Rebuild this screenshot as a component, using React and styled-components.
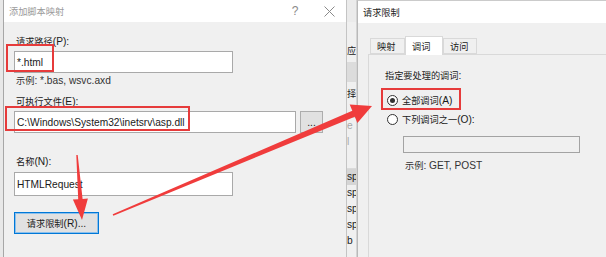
import React from "react";
import styled, { createGlobalStyle } from "styled-components";

const GlobalStyle = createGlobalStyle`
  html, body {
    margin: 0;
    padding: 0;
    background: #f0f0f0;
  }
  body {
    font-family: "Liberation Sans", "Noto Sans CJK SC", sans-serif;
    font-size: 10.2px;
    color: #1a1a1a;
  }
`;

const Screen = styled.div`
  position: relative;
  display: flex;
  width: 606px;
  height: 257px;
  overflow: hidden;
  background: #f0f0f0;
`;

const Gutter = styled.div`
  flex: none;
  width: 3px;
  background: #e8e8e8;
`;

const Dialog = styled.section`
  flex: ${(p) => (p.$width ? "none" : "1")};
  width: ${(p) => (p.$width ? `${p.$width}px` : "auto")};
  display: flex;
  flex-direction: column;
  background: #f0f0f0;
  border-left: 1px solid ${(p) => (p.$active ? "#b9b9b9" : "#a7a7a7")};
  border-right: ${(p) => (p.$active ? "none" : "1px solid #c4c4c4")};
  border-top: ${(p) => (p.$active ? "1px solid #cbcbcb" : "none")};
  box-sizing: border-box;
  min-width: 0;
`;

const TitleBar = styled.header`
  flex: none;
  height: 22px;
  display: flex;
  align-items: center;
  padding-left: 5px;
  background: #fff;
  color: ${(p) => (p.$active ? "#1a1a1a" : "#9a9a9a")};
`;

const TitleText = styled.span`
  flex: 1;
  line-height: 16px;
`;

const CaptionButton = styled.span`
  width: 34px;
  height: 22px;
  display: flex;
  align-items: center;
  justify-content: center;
  color: #8a8a8a;
  font-size: 12px;
`;

const LeftBody = styled.div`
  display: flex;
  flex-direction: column;
  align-items: flex-start;
  padding-left: 10px;
`;

const Label = styled.div`
  margin: ${(p) => p.$top}px 0 ${(p) => p.$bottom || 1}px 2px;
  line-height: 16px;
  white-space: nowrap;
`;

const Hint = styled.div`
  margin: ${(p) => p.$top || 0}px 0 0 ${(p) => p.$left || 2}px;
  line-height: 14px;
  color: #333;
  white-space: nowrap;
`;

const Row = styled.div`
  display: flex;
  gap: 4px;
`;

const TextBox = styled.div`
  box-sizing: border-box;
  width: ${(p) => p.$w}px;
  height: ${(p) => p.$h}px;
  padding-left: 2px;
  display: flex;
  align-items: center;
  background: ${(p) => (p.$disabled ? "#f0f0f0" : "#fff")};
  border: 1px solid ${(p) => (p.$disabled ? "#a3a3a3" : "#a9a9a9")};
  white-space: nowrap;
  overflow: hidden;
  margin: ${(p) => p.$mt || 0}px 0 0 ${(p) => p.$ml || 0}px;
`;

const Button = styled.div`
  box-sizing: border-box;
  height: 22px;
  width: ${(p) => p.$w}px;
  display: flex;
  align-items: center;
  justify-content: center;
  background: #e1e1e1;
  border: 1px solid ${(p) => (p.$default ? "#0078d7" : "#adadad")};
  box-shadow: ${(p) => (p.$default ? "inset 0 0 0 1px #8cc0ec" : "none")};
  margin-top: ${(p) => p.$mt || 0}px;
  white-space: nowrap;
  color: #1a1a1a;
`;

const Strip = styled.div`
  flex: none;
  width: 10px;
  display: flex;
  flex-direction: column;
  overflow: hidden;
  background: #f0f0f0;
  border-right: 1px solid #d4d4d4;
  box-sizing: border-box;
`;

const StripCell = styled.div`
  flex: none;
  height: ${(p) => p.$h}px;
  display: flex;
  align-items: center;
  background: ${(p) => p.$bg || "transparent"};
  border-bottom: ${(p) => (p.$line ? "1px solid #dadada" : "none")};
  color: ${(p) => (p.$dim ? "#a8a8a8" : "#222")};
  white-space: nowrap;
  line-height: 16px;
  box-sizing: border-box;
`;

const RightBody = styled.div`
  flex: 1;
  display: flex;
  flex-direction: column;
  padding-left: 10px;
`;

const TabRow = styled.div`
  display: flex;
  align-items: flex-end;
  margin: 13px 0 0 2px;
  height: 18px;
`;

const Tab = styled.div`
  box-sizing: border-box;
  width: ${(p) => p.$w}px;
  height: ${(p) => (p.$selected ? 19 : 16)}px;
  padding-left: 6px;
  display: flex;
  align-items: center;
  background: ${(p) => (p.$selected ? "#fff" : "#f0f0f0")};
  border: 1px solid #d9d9d9;
  border-bottom: ${(p) => (p.$selected ? "none" : "1px solid #d9d9d9")};
  margin-bottom: ${(p) => (p.$selected ? -1 : 0)}px;
  position: relative;
  z-index: ${(p) => (p.$selected ? 1 : 0)};
  line-height: 16px;
`;

const Panel = styled.div`
  flex: 1;
  display: flex;
  flex-direction: column;
  align-items: flex-start;
  border-top: 1px solid #d9d9d9;
  border-left: 1px solid #d9d9d9;
  padding: 12px 0 0 16px;
`;

const PanelHeading = styled.div`
  line-height: 16px;
  white-space: nowrap;
`;

const Radio = styled.label`
  display: flex;
  align-items: center;
  gap: 4px;
  height: 16px;
  margin: ${(p) => p.$top}px 0 0 2px;
  line-height: 16px;
  white-space: nowrap;
`;

const RadioDot = styled.span`
  box-sizing: border-box;
  width: 11px;
  height: 11px;
  border-radius: 50%;
  border: 1px solid #333;
  background: #fff;
  display: flex;
  align-items: center;
  justify-content: center;
  &::after {
    content: "";
    width: 5px;
    height: 5px;
    border-radius: 50%;
    background: ${(p) => (p.$checked ? "#333" : "transparent")};
  }
`;

const Han = styled.span`
  font-family: "Noto Sans CJK SC", sans-serif;
  font-size: 9.2px;
`;

const Mark = styled.div`
  position: absolute;
  left: ${(p) => p.$x}px;
  top: ${(p) => p.$y}px;
  width: ${(p) => p.$w}px;
  height: ${(p) => p.$h}px;
  box-sizing: border-box;
  border: 2px solid #e63b3b;
  pointer-events: none;
`;

const Overlay = styled.svg`
  position: absolute;
  left: 0;
  top: 0;
  pointer-events: none;
`;

// CJK runs get their own (smaller) face, like the dialog font does
const T = ({ children }) =>
  String(children)
    .split(/([\u3000-\u9fff\uff00-\uffef]+)/)
    .filter(Boolean)
    .map((part, i) =>
      /[\u3000-\u9fff\uff00-\uffef]/.test(part) ? <Han key={i}>{part}</Han> : <React.Fragment key={i}>{part}</React.Fragment>
    );

// tapered annotation arrow from tail to tip
function arrowPoints([tx, ty], [px, py], headLen, headHalf, shaftHalf, tailHalf) {
  const dx = px - tx;
  const dy = py - ty;
  const len = Math.hypot(dx, dy);
  const ux = dx / len;
  const uy = dy / len;
  const nx = -uy;
  const ny = ux;
  const bx = px - ux * headLen;
  const by = py - uy * headLen;
  const pts = [
    [tx + nx * tailHalf, ty + ny * tailHalf],
    [bx + nx * shaftHalf, by + ny * shaftHalf],
    [bx + nx * headHalf, by + ny * headHalf],
    [px, py],
    [bx - nx * headHalf, by - ny * headHalf],
    [bx - nx * shaftHalf, by - ny * shaftHalf],
    [tx - nx * tailHalf, ty - ny * tailHalf],
  ];
  return pts.map((p) => p.map((v) => v.toFixed(1)).join(",")).join(" ");
}

const CloseIcon = () => (
  <svg width="11" height="11" viewBox="0 0 11 11">
    <path d="M0.5 0.5 L10.5 10.5 M10.5 0.5 L0.5 10.5" stroke="#8a8a8a" strokeWidth="1" />
  </svg>
);

const stripRows = [
  { h: 22, bg: "#ebebeb" },
  { h: 20 },
  { h: 16, text: "应" },
  { h: 4 },
  { h: 20, bg: "#dcdcdc" },
  { h: 3 },
  { h: 16, text: "择" },
  { h: 17, line: true },
  { h: 16, text: "e", dim: true },
  { h: 16, text: "l", dim: true },
  { h: 19, line: true },
  { h: 16, bg: "#d5d5d5", text: "sp" },
  { h: 16, text: "sp" },
  { h: 16, text: "sp" },
  { h: 16, text: "sp" },
  { h: 16, text: "b" },
];

export default function App() {
  return (
    <>
      <GlobalStyle />
      <Screen>
        <Gutter />
        <Dialog $width={344}>
          <TitleBar>
            <TitleText>
              <T>添加脚本映射</T>
            </TitleText>
            <CaptionButton>?</CaptionButton>
            <CaptionButton>
              <CloseIcon />
            </CaptionButton>
          </TitleBar>
          <LeftBody>
            <Label $top={11}>
              <T>请求路径(P):</T>
            </Label>
            <TextBox $w={219} $h={22}>*.html</TextBox>
            <Hint>
              <T>示例: *.bas, wsvc.axd</T>
            </Hint>
            <Label $top={5}>
              <T>可执行文件(E):</T>
            </Label>
            <Row>
              <TextBox $w={282} $h={22}>C:\Windows\System32\inetsrv\asp.dll</TextBox>
              <Button $w={23}>...</Button>
            </Row>
            <Label $top={20} $bottom={2}>
              <T>名称(N):</T>
            </Label>
            <TextBox $w={219} $h={24}>HTMLRequest</TextBox>
            <Button $w={85} $mt={16} $default>
              <T>请求限制(R)...</T>
            </Button>
          </LeftBody>
        </Dialog>
        <Strip>
          {stripRows.map((r, i) => (
            <StripCell key={i} $h={r.h} $bg={r.bg} $line={r.line} $dim={r.dim}>
              {r.text && <T>{r.text}</T>}
            </StripCell>
          ))}
        </Strip>
        <Dialog $active>
          <TitleBar $active>
            <TitleText>
              <T>请求限制</T>
            </TitleText>
          </TitleBar>
          <RightBody>
            <TabRow>
              <Tab $w={35}>
                <T>映射</T>
              </Tab>
              <Tab $w={38} $selected>
                <T>调词</T>
              </Tab>
              <Tab $w={34}>
                <T>访问</T>
              </Tab>
            </TabRow>
            <Panel>
              <PanelHeading>
                <T>指定要处理的调词:</T>
              </PanelHeading>
              <Radio $top={8}>
                <RadioDot $checked />
                <span>
                  <T>全部调词(A)</T>
                </span>
              </Radio>
              <Radio $top={3}>
                <RadioDot />
                <span>
                  <T>下列调词之一(O):</T>
                </span>
              </Radio>
              <TextBox $w={177} $h={17} $mt={9} $ml={18} $disabled />
              <Hint $top={5} $left={20}>
                <T>示例: GET, POST</T>
              </Hint>
            </Panel>
          </RightBody>
        </Dialog>

        <Mark $x={6} $y={44} $w={48} $h={28} />
        <Mark $x={5} $y={106} $w={185} $h={25} />
        <Mark $x={381} $y={88} $w={80} $h={22} />

        <Overlay width="606" height="257" viewBox="0 0 606 257">
          <polygon fill="#f03c3c" points={arrowPoints([113, 215], [372, 106], 20, 10, 3.3, 0.8)} />
          <polygon fill="#f03c3c" points={arrowPoints([77, 155], [82, 220], 21, 7.5, 2.2, 0.7)} />
        </Overlay>
      </Screen>
    </>
  );
}
